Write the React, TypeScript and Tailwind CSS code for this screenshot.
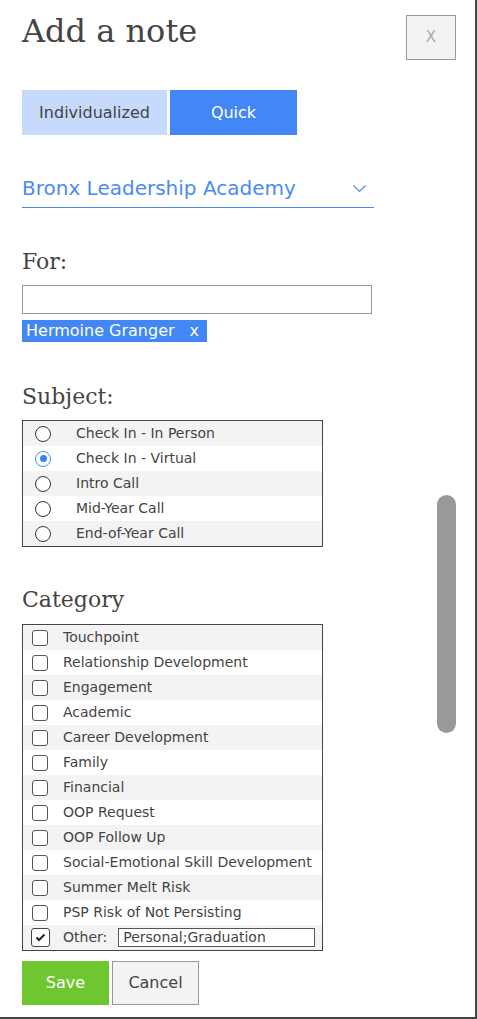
import React, { useState } from 'react';

const subjects = ['Check In - In Person', 'Check In - Virtual', 'Intro Call', 'Mid-Year Call', 'End-of-Year Call'];

const categories = [
  'Touchpoint',
  'Relationship Development',
  'Engagement',
  'Academic',
  'Career Development',
  'Family',
  'Financial',
  'OOP Request',
  'OOP Follow Up',
  'Social-Emotional Skill Development',
  'Summer Melt Risk',
  'PSP Risk of Not Persisting',
];

function Radio({ checked }: { checked: boolean }) {
  return (
    <span
      className={
        checked
          ? 'w-[16px] h-[16px] rounded-full border border-[#4a8af4] bg-white flex items-center justify-center shrink-0'
          : 'w-[16px] h-[16px] rounded-full border border-[#333] bg-white flex shrink-0'
      }
    >
      {checked && <span className="w-[7px] h-[7px] rounded-full bg-[#3b82f6]" />}
    </span>
  );
}

function Checkbox({ checked }: { checked: boolean }) {
  return (
    <span
      className={
        checked
          ? 'w-[19px] h-[19px] -ml-[1px] rounded-[3px] border border-[#444] bg-white flex items-center justify-center shrink-0'
          : 'w-[16px] h-[16px] rounded-[3px] border border-[#555] bg-white flex items-center justify-center shrink-0'
      }
    >
      {checked && (
        <svg width="11" height="9" viewBox="0 0 11 9">
          <polyline points="1.5,4.5 4,7 9.5,1.5" fill="none" stroke="#222" strokeWidth="2" />
        </svg>
      )}
    </span>
  );
}

export default function App() {
  const [mode, setMode] = useState<'individual' | 'quick'>('quick');
  const [subject, setSubject] = useState(1);

  const serif = "font-['DejaVu_Serif',Georgia,serif]";

  return (
    <div className="relative w-[477px] h-[1019px] bg-white border-r-2 border-b-2 border-[#444] overflow-hidden font-['DejaVu_Sans',Verdana,sans-serif] text-[#444]">
      <div className="px-[22px]">
        {/* header */}
        <div className="pt-[15px] -mr-[3px] flex justify-between items-start">
          <h1 className={`${serif} text-[32px] leading-[32px] text-[#444]`}>Add a note</h1>
          <button className="w-[50px] h-[45px] border border-[#999] bg-[#f3f3f3] text-[#aaa] text-[15px] flex items-center justify-center">
            X
          </button>
        </div>

        {/* tabs */}
        <div className="mt-[30px] flex gap-[3px]">
          <button
            onClick={() => setMode('individual')}
            className={
              mode === 'individual'
                ? 'w-[145px] h-[45px] bg-[#4287f5] text-white text-[16px]'
                : 'w-[145px] h-[45px] bg-[#c6dafc] text-[#444] text-[16px]'
            }
          >
            Individualized
          </button>
          <button
            onClick={() => setMode('quick')}
            className={
              mode === 'quick'
                ? 'w-[127px] h-[45px] bg-[#4287f5] text-white text-[16px]'
                : 'w-[127px] h-[45px] bg-[#c6dafc] text-[#444] text-[16px]'
            }
          >
            Quick
          </button>
        </div>

        {/* school select */}
        <div className="mt-[41px] w-[352px] pb-[7px] border-b-[1.5px] border-[#4a8af4] flex items-center justify-between">
          <span className="text-[20px] leading-[24px] text-[#4a8af4]">Bronx Leadership Academy</span>
          <svg width="13" height="8" viewBox="0 0 13 8" className="mr-[8px] mt-[2px]">
            <polyline points="0.5,0.5 6.5,6.5 12.5,0.5" fill="none" stroke="#4a8af4" strokeWidth="1.2" />
          </svg>
        </div>

        {/* for */}
        <div className={`${serif} mt-[41px] text-[22px] leading-[26px]`}>For:</div>
        <input className="mt-[10px] block w-[350px] h-[29px] border border-[#999] bg-white outline-none px-2" />
        <div className="mt-[6px] inline-flex items-center h-[22px] bg-[#4287f5] text-white text-[16px] pl-[4px] pr-[8px]">
          <span>Hermoine Granger</span>
          <span className="ml-[15px]">x</span>
        </div>

        {/* subject */}
        <div className={`${serif} mt-[41px] text-[22px] leading-[26px]`}>Subject:</div>
        <div className="mt-[10px] w-[301px] border border-[#444]">
          {subjects.map((s, i) => (
            <div
              key={s}
              onClick={() => setSubject(i)}
              className={`h-[25px] flex items-center text-[14px] ${i % 2 === 0 ? 'bg-[#f3f3f3]' : 'bg-white'}`}
            >
              <span className="ml-[12px] flex">
                <Radio checked={subject === i} />
              </span>
              <span className="ml-[25px]">{s}</span>
            </div>
          ))}
        </div>

        {/* category */}
        <div className={`${serif} mt-[40px] text-[22px] leading-[26px]`}>Category</div>
        <div className="mt-[11px] w-[301px] border border-[#444]">
          {categories.map((c, i) => (
            <div key={c} className={`h-[25px] flex items-center text-[14px] ${i % 2 === 0 ? 'bg-[#f3f3f3]' : 'bg-white'}`}>
              <span className="ml-[9px] flex">
                <Checkbox checked={false} />
              </span>
              <span className="ml-[15px]">{c}</span>
            </div>
          ))}
          <div className="h-[25px] flex items-center text-[14px] bg-[#f3f3f3]">
            <span className="ml-[9px] flex">
              <Checkbox checked={true} />
            </span>
            <span className="ml-[13px]">Other:</span>
            <input
              defaultValue="Personal;Graduation"
              className="ml-[11px] w-[197px] h-[19px] border border-[#555] bg-white text-[14px] text-[#444] px-[4px] outline-none"
            />
          </div>
        </div>

        {/* actions */}
        <div className="mt-[10px] flex gap-[3px]">
          <button className="w-[87px] h-[44px] bg-[#6ec72e] text-white text-[16px]">Save</button>
          <button className="w-[87px] h-[44px] bg-[#f3f3f3] border border-[#999] text-[#444] text-[16px]">Cancel</button>
        </div>
      </div>

      {/* overlay scrollbar */}
      <div className="absolute left-[437px] top-[495px] w-[19px] h-[238px] rounded-full bg-[#999]" />
    </div>
  );
}
